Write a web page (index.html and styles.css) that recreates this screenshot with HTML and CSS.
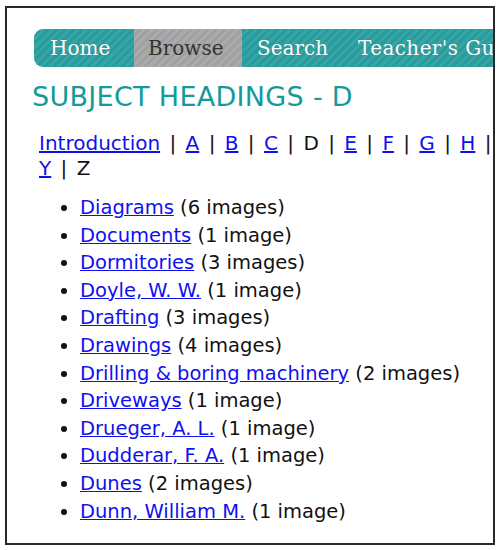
FILE: index.html
```html
<!DOCTYPE html>
<html>
<head>
<meta charset="utf-8">
<link rel="stylesheet" href="styles.css">
</head>
<body>
<div class="frame">
  <div class="page">
    <nav class="nav">
      <a class="tab tab-home" href="#">Home</a>
      <a class="tab tab-browse active" href="#">Browse</a>
      <a class="tab tab-search" href="#">Search</a>
      <a class="tab tab-guide" href="#">Teacher's Guide</a>
      <a class="tab" href="#">About</a>
    </nav>
    <h1 class="title">SUBJECT HEADINGS - D</h1>
    <p class="letters"><a href="#">Introduction</a> <span class="sep">|</span> <a href="#">A</a> <span class="sep">|</span> <a href="#">B</a> <span class="sep">|</span> <a href="#">C</a> <span class="sep">|</span> D <span class="sep">|</span> <a href="#">E</a> <span class="sep">|</span> <a href="#">F</a> <span class="sep">|</span> <a href="#">G</a> <span class="sep">|</span> <a href="#">H</a> <span class="sep">|</span> <a href="#">I</a> <span class="sep">|</span> <a href="#">J</a> <span class="sep">|</span> <a href="#">K</a> <span class="sep">|</span> <a href="#">L</a> <span class="sep">|</span> <a href="#">M</a> <span class="sep">|</span> <a href="#">N</a> <span class="sep">|</span> <a href="#">O</a> <span class="sep">|</span> <a href="#">P</a> <span class="sep">|</span> <a href="#">Q</a> <span class="sep">|</span> <a href="#">R</a> <span class="sep">|</span> <a href="#">S</a> <span class="sep">|</span> <a href="#">T</a> <span class="sep">|</span> <a href="#">U</a> <span class="sep">|</span> <a href="#">V</a> <span class="sep">|</span> <a href="#">W</a> <span class="sep">|</span> <a href="#">X</a> <span class="sep">|</span><br><a href="#">Y</a> <span class="sep">|</span> Z</p>
    <ul class="subjects">
      <li><a href="#">Diagrams</a> (6 images)</li>
      <li><a href="#">Documents</a> (1 image)</li>
      <li><a href="#">Dormitories</a> (3 images)</li>
      <li><a href="#">Doyle, W. W.</a> (1 image)</li>
      <li><a href="#">Drafting</a> (3 images)</li>
      <li><a href="#">Drawings</a> (4 images)</li>
      <li><a href="#">Drilling &amp; boring machinery</a> (2 images)</li>
      <li><a href="#">Driveways</a> (1 image)</li>
      <li><a href="#">Drueger, A. L.</a> (1 image)</li>
      <li><a href="#">Dudderar, F. A.</a> (1 image)</li>
      <li><a href="#">Dunes</a> (2 images)</li>
      <li><a href="#">Dunn, William M.</a> (1 image)</li>
    </ul>
  </div>
</div>
</body>
</html>
```

FILE: styles.css
```css
html, body {
  margin: 0;
  padding: 0;
  background: #ffffff;
}

.frame {
  margin: 6px 0 0 5px;
  width: 486px;
  height: 535px;
  border: 2px solid #2a2a2a;
  overflow: hidden;
  background: #ffffff;
}

.page {
  width: 1000px;
  padding: 21px 0 0 27px;
  font-family: "DejaVu Sans", Verdana, sans-serif;
  font-size: 19.5px;
  color: #111111;
}

.nav {
  display: flex;
  height: 38px;
  width: 900px;
  border-radius: 9px 0 0 9px;
  overflow: hidden;
  background-color: #2ba0a1;
  background-image: repeating-linear-gradient(135deg, rgba(255,255,255,0.05) 0 3px, rgba(0,0,0,0.03) 3px 6px);
}

.tab {
  display: block;
  flex: none;
  box-sizing: border-box;
  height: 38px;
  line-height: 38px;
  font-family: "DejaVu Serif", "Liberation Serif", serif;
  font-size: 20px;
  color: #ffffff;
  text-decoration: none;
  text-shadow: 0 0 1px rgba(0,0,0,0.25);
  padding: 0 15px;
  white-space: nowrap;
}

.tab-home {
  width: 100px;
  padding-left: 16px;
}

.tab-browse {
  width: 108px;
  padding-left: 14px;
}

.tab-search {
  width: 101px;
  padding-left: 15px;
}

.tab-guide {
  letter-spacing: 0.4px;
}

.active {
  color: #333333;
  text-shadow: none;
  background-color: #a5a5a5;
  background-image: repeating-linear-gradient(135deg, rgba(255,255,255,0.06) 0 3px, rgba(0,0,0,0.03) 3px 6px);
}

.title {
  margin: 15px 0 0 -2px;
  font-weight: normal;
  font-size: 27px;
  line-height: 30px;
  color: #149a9a;
  letter-spacing: 0.3px;
}

.letters {
  margin: 19px 0 0 5px;
  font-size: 20px;
  line-height: 25px;
  white-space: nowrap;
}

.sep {
  margin: 0 3px;
}

a {
  color: #1010ee;
  text-decoration: underline;
}

.subjects {
  margin: 13px 0 0 0;
  padding: 0 0 0 46px;
  list-style: disc;
}

.subjects li {
  line-height: 27.6px;
}
```
